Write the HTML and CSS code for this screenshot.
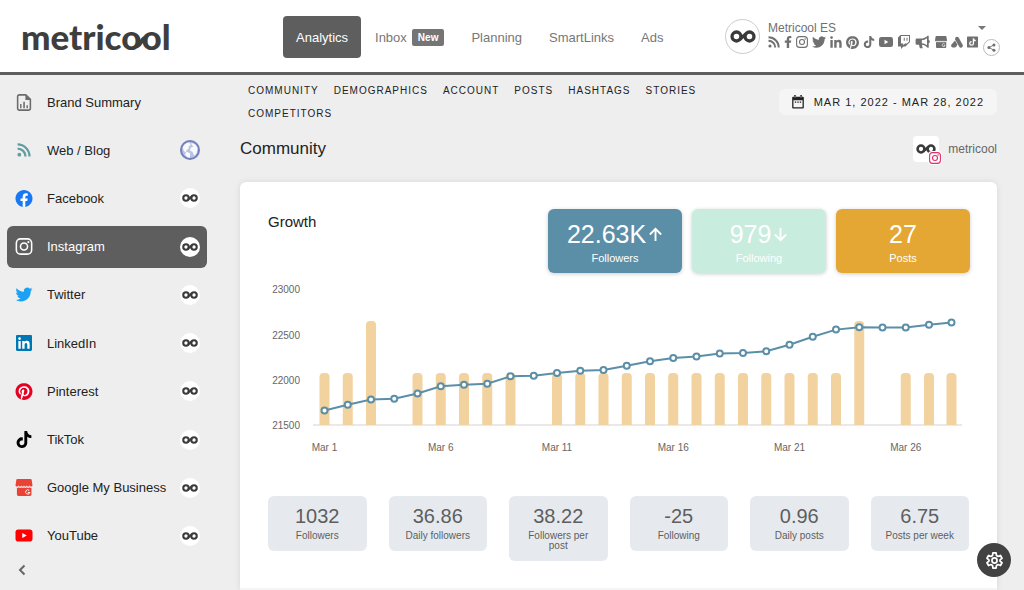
FILE: index.html
```html
<!DOCTYPE html>
<html lang="en">
<head>
<meta charset="utf-8">
<meta name="viewport" content="width=device-width, initial-scale=1">
<title>Metricool – Instagram analytics</title>
<link rel="stylesheet" href="styles.css">
</head>
<body>
<svg class="sprite" aria-hidden="true">
  <symbol id="rss" viewBox="0 0 24 24"><circle cx="4" cy="20" r="3.2"/><path d="M1 9.5A13.5 13.5 0 0 1 14.500 23M1 2.500A20.500 20.500 0 0 1 21.500 23" fill="none" stroke="currentColor" stroke-width="3.800"/></symbol>
  <symbol id="facebook" viewBox="0 0 24 24"><circle cx="12" cy="12" r="11" fill="#fff"/><path d="M24 12.073c0-6.627-5.373-12-12-12s-12 5.373-12 12c0 5.99 4.388 10.954 10.125 11.854v-8.385H7.078v-3.47h3.047V9.43c0-3.007 1.792-4.669 4.533-4.669 1.312 0 2.686.235 2.686.235v2.953H15.83c-1.491 0-1.956.925-1.956 1.874v2.25h3.328l-.532 3.47h-2.796v8.385C19.612 23.027 24 18.062 24 12.073z"/></symbol>
  <symbol id="fb" viewBox="0 0 14 24"><path d="M12.800 13.500l.7-4.400H9.300V6.300c0-1.200.6-2.400 2.500-2.400h1.900V.3S12 0 10.300 0C6.800 0 4.500 2.100 4.500 5.900v3.200H.6v4.400h3.900V24h4.800V13.500z"/></symbol>
  <symbol id="instagram" viewBox="0 0 24 24"><g fill="none" stroke="currentColor" stroke-width="2.200"><rect x="1.200" y="1.200" width="21.600" height="21.600" rx="6"/><circle cx="12" cy="12" r="5"/></g><circle cx="18.200" cy="5.800" r="1.500"/></symbol>
  <symbol id="twitter" viewBox="0 0 24 24"><path d="M23.953 4.570a10 10 0 01-2.825.775 4.958 4.958 0 002.163-2.723c-.951.555-2.005.959-3.127 1.184a4.920 4.920 0 00-8.384 4.482C7.690 8.095 4.067 6.130 1.640 3.162a4.822 4.822 0 00-.666 2.475c0 1.710.870 3.213 2.188 4.096a4.904 4.904 0 01-2.228-.616v.060a4.923 4.923 0 003.946 4.827 4.996 4.996 0 01-2.212.085 4.936 4.936 0 004.604 3.417 9.867 9.867 0 01-6.102 2.105c-.390 0-.779-.023-1.170-.067a13.995 13.995 0 007.557 2.209c9.053 0 13.998-7.496 13.998-13.985 0-.210 0-.420-.015-.630A9.935 9.935 0 0024 4.590z"/></symbol>
  <symbol id="linkedin" viewBox="0 0 24 24"><rect x="1" y="1" width="22" height="22" fill="#fff"/><path d="M20.447 20.452h-3.554v-5.569c0-1.328-.027-3.037-1.852-3.037-1.853 0-2.136 1.445-2.136 2.939v5.667H9.351V9h3.414v1.561h.046c.477-.9 1.637-1.850 3.370-1.850 3.601 0 4.267 2.370 4.267 5.455v6.286zM5.337 7.433c-1.144 0-2.063-.926-2.063-2.065 0-1.138.920-2.063 2.063-2.063 1.140 0 2.064.925 2.064 2.063 0 1.139-.925 2.065-2.064 2.065zm1.782 13.019H3.555V9h3.564v11.452zM22.225 0H1.771C.792 0 0 .774 0 1.729v20.542C0 23.227.792 24 1.771 24h20.451C23.200 24 24 23.227 24 22.271V1.729C24 .774 23.200 0 22.222 0h.003z"/></symbol>
  <symbol id="li" viewBox="3 3 18 18"><path d="M20.447 20.452h-3.554v-5.569c0-1.328-.027-3.037-1.852-3.037-1.853 0-2.136 1.445-2.136 2.939v5.667H9.351V9h3.414v1.561h.046c.477-.9 1.637-1.850 3.370-1.850 3.601 0 4.267 2.370 4.267 5.455v6.286zM5.337 7.433a2.064 2.064 0 1 1 0-4.128 2.064 2.064 0 0 1 0 4.128zm1.782 13.019H3.555V9h3.564z"/></symbol>
  <symbol id="pinterest" viewBox="0 0 24 24"><circle class="pin-back" cx="12" cy="12" r="11"/><path d="M12.017 0C5.396 0 .029 5.367.029 11.987c0 5.079 3.158 9.417 7.618 11.162-.105-.949-.199-2.403.041-3.439.219-.937 1.406-5.957 1.406-5.957s-.359-.720-.359-1.781c0-1.663.967-2.911 2.168-2.911 1.024 0 1.518.769 1.518 1.688 0 1.029-.653 2.567-.992 3.992-.285 1.193.6 2.165 1.775 2.165 2.128 0 3.768-2.245 3.768-5.487 0-2.861-2.063-4.869-5.008-4.869-3.410 0-5.409 2.562-5.409 5.199 0 1.033.394 2.143.889 2.741.099.120.112.225.085.345-.090.375-.293 1.199-.334 1.363-.053.225-.172.271-.401.165-1.495-.690-2.433-2.878-2.433-4.646 0-3.776 2.748-7.252 7.920-7.252 4.158 0 7.392 2.967 7.392 6.923 0 4.135-2.607 7.462-6.233 7.462-1.214 0-2.354-.629-2.758-1.379l-.749 2.848c-.269 1.045-1.004 2.352-1.498 3.146 1.123.345 2.306.535 3.550.535 6.607 0 11.985-5.365 11.985-11.987C23.970 5.390 18.592.026 11.985.026z"/></symbol>
  <symbol id="tiktok" viewBox="0 0 24 24"><path d="M12.525.020c1.310-.020 2.610-.010 3.910-.020.080 1.530.630 3.090 1.750 4.170 1.120 1.110 2.700 1.620 4.240 1.790v4.030c-1.440-.050-2.890-.350-4.200-.970-.570-.260-1.100-.590-1.620-.930-.010 2.920.010 5.840-.020 8.750-.080 1.400-.540 2.790-1.350 3.940-1.310 1.920-3.580 3.170-5.910 3.210-1.430.080-2.860-.310-4.080-1.030-2.020-1.190-3.440-3.370-3.650-5.710-.020-.5-.030-1-.010-1.490.180-1.900 1.120-3.720 2.580-4.960 1.660-1.440 3.980-2.130 6.150-1.720.020 1.480-.040 2.960-.040 4.440-.990-.320-2.150-.230-3.020.370-.630.410-1.110 1.040-1.360 1.750-.210.510-.150 1.070-.140 1.610.240 1.640 1.820 3.020 3.500 2.870 1.120-.010 2.190-.660 2.770-1.610.190-.330.4-.670.410-1.060.1-1.790.060-3.570.070-5.360.010-4.030-.010-8.050.020-12.070z"/></symbol>
  <symbol id="youtube" viewBox="0 0 24 24"><rect y="3.500" width="24" height="17" rx="4"/><path d="M9.500 8.300v7.400l6.500-3.700z" fill="#fff"/></symbol>
  <symbol id="twitch" viewBox="0 0 24 24"><path d="M11.571 4.714h1.715v5.143H11.570zm4.715 0H18v5.143h-1.714zM6 0L1.714 4.286v15.428h5.143V24l4.286-4.286h3.428L22.286 12V0zm14.571 11.143l-3.428 3.428h-3.429l-3 3v-3H6.857V1.714h13.714Z"/></symbol>
  <symbol id="horn" viewBox="0 0 28 24"><path d="M24 1v7.600a3 3 0 0 1 0 5.600V22h-2c-3.200-3-6.500-4.600-10-5l1.500 6h-5L7 17H3.500A2.500 2.500 0 0 1 1 14.500v-6A2.500 2.500 0 0 1 3.500 6H10c5 0 9-2 12-5zm-3 4.500C18 7.700 15 8.800 12 9v5c3 .2 6 1.300 9 3.500z"/></symbol>
  <symbol id="store" viewBox="0 0 24 24"><path d="M3 0h18a2 2 0 0 1 2 2l1 7q-2 3.500-4 0-2 3.500-4 0-2 3.500-4 0-2 3.500-4 0-2 3.500-4 0-2 3.500-4 0L1 2a2 2 0 0 1 2-2z"/><path d="M2 12.500q1.500.5 2.500-.8 2 2 3.600 0 2 2 4 0 2 2 4 0 2 2 3.600 0 1 1.300 2.800.8V22a2 2 0 0 1-2 2H4a2 2 0 0 1-2-2z"/><path d="M19.400 16.200a3 3 0 1 0 .8 2.800h-2.800" fill="none" stroke="#fff" stroke-width="1.300"/></symbol>
  <symbol id="ads" viewBox="0 0 24 24"><path d="M8.800 3.200Q12 0 15.200 3.200L23.500 18q1 3.500-2 5-3.500 1-5-1.500L8.300 7z"/><path d="M8 9l5 8.500L10 22Q6 24 2 22.500-1 20 1 17z"/></symbol>
  <symbol id="tiksquare" viewBox="0 0 24 24"><rect width="24" height="24" rx="1"/><path d="M14 4v11a4 4 0 1 1-4-4M14 4q.5 4.500 5 5" fill="none" stroke="#fff" stroke-width="2.800"/></symbol>
  <symbol id="loop" viewBox="0 0 28 14"><g fill="none" stroke="#3a3a3a" stroke-width="3.600"><circle cx="7" cy="7" r="4.800"/><circle cx="21" cy="7" r="4.800"/><path d="M10.300 10.200L17.700 3.800"/></g></symbol>
  <symbol id="report" viewBox="0 0 24 24"><path d="M14.500 1.200H5.500a2.500 2.500 0 0 0-2.500 2.500v16.600a2.500 2.500 0 0 0 2.500 2.500h13a2.500 2.500 0 0 0 2.500-2.500V7.500z" fill="none" stroke="currentColor" stroke-width="2.200"/><path d="M14 1v7.500h7.500zM6.500 14h2v6h-2zM11 11h2.200v9H11zM15.500 16h2v4h-2z"/></symbol>
  <symbol id="globe" viewBox="0 0 24 24"><circle cx="12" cy="12" r="10.800" fill="#b9c4e2" stroke="#7480bb" stroke-width="2.400"/><path d="M3.500 9Q5 4 11 3l2 3-3 2 1 2-3 2-1 3q-3-1-3.500-6zM13 4q6 0 8 6l-1 6-3 3-2-5-3-1 1-4 3-1zM8 14l4 2v5q-4 0-6-4z" fill="#f8faff"/></symbol>
  <symbol id="share" viewBox="0 0 24 24"><circle cx="5" cy="12" r="4"/><circle cx="18.500" cy="5" r="4"/><circle cx="18.500" cy="19" r="4"/><path d="M18.500 5L5 12l13.500 7" fill="none" stroke="currentColor" stroke-width="2.400"/></symbol>
  <symbol id="calendar" viewBox="0 0 24 24"><path d="M3.500 3h17A1.500 1.500 0 0 1 22 4.500v17a1.500 1.500 0 0 1-1.500 1.500h-17A1.500 1.500 0 0 1 2 21.500v-17A1.500 1.500 0 0 1 3.500 3zM4.200 9v11.800h15.600V9zM5.500 0h2.600v4H5.500zM16 0h2.600v4H16zM6.500 11h2.400v2.400H6.500zM10.800 11h2.400v2.400h-2.400zM15 11h2.400v2.400H15z" fill-rule="evenodd"/></symbol>
  <symbol id="gear" viewBox="0 0 24 24"><g fill="none" stroke="currentColor" stroke-width="2.200" stroke-linejoin="round"><path d="M10 2.500h4l.5 3.200 2 1.200 3-1.200 2 3.500-2.500 2v1.600l2.500 2-2 3.500-3-1.200-2 1.200-.5 3.200h-4l-.5-3.200-2-1.200-3 1.200-2-3.500 2.500-2v-1.600l-2.500-2 2-3.500 3 1.200 2-1.200z"/><circle cx="12" cy="12" r="3.200"/></g></symbol>
</svg>

<header class="topbar">
  <a class="brand" href="#">metrico<span class="brand-link">ol<svg class="brand-bridge" viewBox="0 0 12 12" aria-hidden="true"><path d="M1 10.500Q4 10 6 6T11 1.500"/></svg></span></a>
  <nav class="tabs" aria-label="Main">
    <a class="tab tab-active" href="#">Analytics</a>
    <a class="tab" href="#">Inbox <span class="badge">New</span></a>
    <a class="tab" href="#">Planning</a>
    <a class="tab" href="#">SmartLinks</a>
    <a class="tab" href="#">Ads</a>
  </nav>
  <div class="account">
    <span class="avatar"><svg class="avatar-loop"><use href="#loop"/></svg></span>
    <div class="account-info">
      <button class="account-name" type="button">Metricool ES <span class="caret"></span></button>
      <div class="networks">
        <svg class="net"><use href="#rss"/></svg>
        <svg class="net net-thin"><use href="#fb"/></svg>
        <svg class="net"><use href="#instagram"/></svg>
        <svg class="net net-wide"><use href="#twitter"/></svg>
        <svg class="net"><use href="#li"/></svg>
        <svg class="net net-pin"><use href="#pinterest"/></svg>
        <svg class="net"><use href="#tiktok"/></svg>
        <svg class="net net-wide"><use href="#youtube"/></svg>
        <svg class="net net-wide"><use href="#twitch"/></svg>
        <svg class="net net-horn"><use href="#horn"/></svg>
        <svg class="net"><use href="#store"/></svg>
        <svg class="net"><use href="#ads"/></svg>
        <svg class="net net-square"><use href="#tiksquare"/></svg>
      </div>
      <button class="share" type="button" aria-label="Share"><svg class="share-icon"><use href="#share"/></svg></button>
    </div>
  </div>
</header>

<div class="shell">
  <aside class="sidebar">
    <nav class="side-nav" aria-label="Networks">
      <a class="side-item" href="#"><svg class="side-icon c-gray"><use href="#report"/></svg><span class="side-label">Brand Summary</span></a>
      <a class="side-item" href="#"><svg class="side-icon side-icon-small c-teal"><use href="#rss"/></svg><span class="side-label">Web / Blog</span><svg class="globe"><use href="#globe"/></svg></a>
      <a class="side-item" href="#"><svg class="side-icon c-facebook"><use href="#facebook"/></svg><span class="side-label">Facebook</span><span class="mini"><svg class="mini-loop"><use href="#loop"/></svg></span></a>
      <a class="side-item side-active" href="#" aria-current="page"><svg class="side-icon"><use href="#instagram"/></svg><span class="side-label">Instagram</span><span class="mini"><svg class="mini-loop"><use href="#loop"/></svg></span></a>
      <a class="side-item" href="#"><svg class="side-icon c-twitter"><use href="#twitter"/></svg><span class="side-label">Twitter</span><span class="mini"><svg class="mini-loop"><use href="#loop"/></svg></span></a>
      <a class="side-item" href="#"><svg class="side-icon side-icon-mid c-linkedin"><use href="#linkedin"/></svg><span class="side-label">LinkedIn</span><span class="mini"><svg class="mini-loop"><use href="#loop"/></svg></span></a>
      <a class="side-item" href="#"><svg class="side-icon c-pinterest"><use href="#pinterest"/></svg><span class="side-label">Pinterest</span><span class="mini"><svg class="mini-loop"><use href="#loop"/></svg></span></a>
      <a class="side-item" href="#"><svg class="side-icon c-black"><use href="#tiktok"/></svg><span class="side-label">TikTok</span><span class="mini"><svg class="mini-loop"><use href="#loop"/></svg></span></a>
      <a class="side-item" href="#"><svg class="side-icon c-google"><use href="#store"/></svg><span class="side-label">Google My Business</span><span class="mini"><svg class="mini-loop"><use href="#loop"/></svg></span></a>
      <a class="side-item" href="#"><svg class="side-icon c-youtube"><use href="#youtube"/></svg><span class="side-label">YouTube</span><span class="mini"><svg class="mini-loop"><use href="#loop"/></svg></span></a>
    </nav>
    <button class="collapse" type="button" aria-label="Collapse menu"><svg class="chevron" viewBox="0 0 8 12"><path d="M6.500 1.500L2 6l4.500 4.500"/></svg></button>
  </aside>

  <main class="content">
    <div class="toolbar">
      <nav class="subnav" aria-label="Sections">
        <a class="sub" href="#">COMMUNITY</a>
        <a class="sub" href="#">DEMOGRAPHICS</a>
        <a class="sub" href="#">ACCOUNT</a>
        <a class="sub" href="#">POSTS</a>
        <a class="sub" href="#">HASHTAGS</a>
        <a class="sub" href="#">STORIES</a>
        <a class="sub" href="#">COMPETITORS</a>
      </nav>
      <button class="dates" type="button"><svg class="cal-icon"><use href="#calendar"/></svg>MAR 1, 2022 - MAR 28, 2022</button>
    </div>

    <div class="heading">
      <h1 class="title">Community</h1>
      <div class="profile">
        <span class="profile-pic"><svg class="profile-loop"><use href="#loop"/></svg><span class="profile-badge"><svg class="profile-ig"><use href="#instagram"/></svg></span></span>
        metricool
      </div>
    </div>

    <section class="card">
      <div class="card-head">
        <h2 class="card-title">Growth</h2>
        <div class="kpis">
          <div class="kpi kpi-blue"><span class="kpi-value">22.63K<svg class="arrow" viewBox="0 0 16 16"><path d="M8 15V2M2 8l6-6 6 6"/></svg></span><span class="kpi-label">Followers</span></div>
          <div class="kpi kpi-mint"><span class="kpi-value">979<svg class="arrow" viewBox="0 0 16 16"><path d="M8 1v13M2 8l6 6 6-6"/></svg></span><span class="kpi-label">Following</span></div>
          <div class="kpi kpi-gold"><span class="kpi-value">27</span><span class="kpi-label">Posts</span></div>
        </div>
      </div>
      <svg class="chart" id="chart" viewBox="0 0 702 180" role="img" aria-label="Followers and posts per day"></svg>
      <div class="stats">
        <div class="stat"><span class="stat-value">1032</span><span class="stat-label">Followers</span></div>
        <div class="stat"><span class="stat-value">36.86</span><span class="stat-label">Daily followers</span></div>
        <div class="stat"><span class="stat-value">38.22</span><span class="stat-label">Followers per post</span></div>
        <div class="stat"><span class="stat-value">-25</span><span class="stat-label">Following</span></div>
        <div class="stat"><span class="stat-value">0.96</span><span class="stat-label">Daily posts</span></div>
        <div class="stat"><span class="stat-value">6.75</span><span class="stat-label">Posts per week</span></div>
      </div>
    </section>
  </main>
</div>
<button class="settings" type="button" aria-label="Settings"><svg class="settings-icon"><use href="#gear"/></svg></button>
<script src="chart.js"></script>
</body>
</html>
```

FILE: styles.css
```css
* { box-sizing: border-box; }

body {
  margin: 0;
  min-height: 100vh;
  display: flex;
  flex-direction: column;
  background: #eee;
  color: #222;
  font-family: "Liberation Sans", Arial, sans-serif;
  font-size: 13px;
}

a { color: inherit; text-decoration: none; }
button { border: 0; padding: 0; background: none; color: inherit; font: inherit; cursor: pointer; }
svg { display: block; flex: none; fill: currentColor; }
.sprite { position: absolute; width: 0; height: 0; }

/* Top bar */
.topbar {
  display: flex;
  align-items: center;
  height: 75px;
  padding: 0 24px 0 21px;
  background: #fff;
  border-bottom: 3px solid #5e5e5e;
}
.brand {
  width: 262px;
  color: #3e3e3e;
  font-family: Lato, sans-serif;
  font-size: 35px;
  font-weight: 900;
  line-height: 40px;
}
.brand-link { position: relative; }
.brand-bridge {
  position: absolute;
  left: -6px;
  top: 21px;
  width: 12px;
  height: 12px;
  fill: none;
  stroke: #3e3e3e;
  stroke-width: 4;
}
.tabs { display: flex; align-items: center; gap: 1px; padding-top: 2px; color: #777; }
.tab { display: flex; align-items: center; gap: 5px; height: 42px; padding: 0 13px; }
.tab-active { background: #5e5e5e; color: #fff; border-radius: 4px; }
.badge {
  padding: 0 6px;
  background: #757575;
  color: #fff;
  border-radius: 2px;
  font-size: 10px;
  font-weight: bold;
  line-height: 17px;
}
.account { display: flex; align-items: center; gap: 8px; margin-left: auto; padding-top: 1px; color: #707070; }
.avatar {
  display: grid;
  place-items: center;
  width: 35px;
  height: 35px;
  border: 1px solid #ccc;
  border-radius: 50%;
}
.avatar-loop { width: 26px; height: 13px; }
.account-info { position: relative; width: 232px; padding-bottom: 3px; }
.account-name {
  display: flex;
  align-items: center;
  justify-content: space-between;
  width: 218px;
  height: 14px;
  font-size: 12px;
}
.caret { border: 4px solid transparent; border-top-color: #777; border-bottom: 0; }
.networks { display: flex; align-items: center; gap: 4px; height: 14px; }
.net { width: 12px; height: 12px; }
.net-thin { width: 8px; }
.net-wide { width: 14px; height: 14px; }
.net-pin { width: 13px; height: 13px; }
.net-horn { width: 16px; height: 14px; }
.net-square { width: 11px; }
.pin-back { fill: #fff; }
.share {
  position: absolute;
  right: 0;
  bottom: -4px;
  display: grid;
  place-items: center;
  width: 17px;
  height: 17px;
  background: #fff;
  border: 1px solid #bbb;
  border-radius: 50%;
}
.share-icon { width: 9px; height: 9px; }

/* Sidebar */
.shell { display: flex; flex: 1; }
.sidebar { display: flex; flex-direction: column; flex: none; width: 214px; padding: 6px 7px 7px; }
.side-nav { display: flex; flex: 1; flex-direction: column; justify-content: space-between; }
.side-item {
  display: flex;
  align-items: center;
  gap: 14px;
  height: 42px;
  padding: 0 7px 0 8px;
  border-radius: 6px;
}
.side-active { background: #5e5e5e; color: #fff; }
.side-icon { width: 18px; height: 17px; }
.side-icon-small { height: 14px; }
.side-icon-mid { height: 16px; }
.side-label { flex: 1; white-space: nowrap; }
.globe { width: 20px; height: 20px; }
.mini {
  display: grid;
  place-items: center;
  width: 20px;
  height: 20px;
  background: #fff;
  border-radius: 50%;
}
.side-item .mini, .side-item .globe { margin-left: -14px; }
.mini-loop { width: 16px; height: 8px; }
.c-gray { color: #6b6b6b; }
.c-teal { color: #5f9ea0; }
.c-facebook { color: #1877f2; }
.c-twitter { color: #1da1f2; }
.c-linkedin { color: #0077b5; }
.c-pinterest { color: #e60023; }
.c-black { color: #000; }
.c-google { color: #ea4335; }
.c-youtube { color: #f00; }
.collapse { display: grid; place-items: center; width: 29px; height: 26px; color: #666; }
.chevron { width: 8px; height: 12px; fill: none; stroke: currentColor; stroke-width: 2; }

/* Content */
.content { display: flex; flex: 1; flex-direction: column; min-width: 0; padding: 4px 27px 0 26px; }
.toolbar { display: flex; align-items: flex-start; justify-content: space-between; }
.subnav { display: flex; flex: 1; flex-wrap: wrap; column-gap: 15px; padding-left: 8px; }
.sub { font-size: 10px; line-height: 23px; letter-spacing: 1px; }
.dates {
  display: flex;
  align-items: center;
  gap: 9px;
  height: 26px;
  margin-top: 10px;
  padding: 0 13px 0 12px;
  background: #f5f5f5;
  border-radius: 6px;
  font-size: 11px;
  letter-spacing: 1px;
}
.cal-icon { width: 14px; height: 14px; }
.heading { display: flex; align-items: center; justify-content: space-between; padding: 11px 0 20px; }
.title { margin: 0; font-size: 17px; font-weight: normal; line-height: 26px; }
.profile { display: flex; align-items: center; gap: 9px; color: #666; font-size: 12px; }
.profile-pic {
  position: relative;
  display: grid;
  place-items: center;
  width: 26px;
  height: 26px;
  background: #fff;
  border-radius: 4px;
}
.profile-loop { width: 20px; height: 10px; }
.profile-badge {
  position: absolute;
  right: -3px;
  bottom: -3px;
  display: grid;
  place-items: center;
  width: 14px;
  height: 14px;
  background: #fff;
  border-radius: 4px;
  color: #e1306c;
}
.profile-ig { width: 12px; height: 12px; }

.card {
  flex: 1;
  padding: 27px 27px 0 28px;
  background: #fff;
  border-radius: 6px 6px 0 0;
  box-shadow: 0 0 6px rgba(0, 0, 0, 0.1);
}
.card-head { display: flex; align-items: flex-start; justify-content: space-between; }
.card-title { margin: 0; font-size: 15px; font-weight: normal; line-height: 26px; }
.kpis { display: flex; gap: 10px; }
.kpi {
  display: flex;
  flex-direction: column;
  align-items: center;
  width: 134px;
  height: 64px;
  padding-top: 10px;
  border-radius: 6px;
  box-shadow: 0 1px 4px rgba(0, 0, 0, 0.2);
  color: #fff;
}
.kpi-value { display: flex; align-items: center; gap: 2px; font-size: 25px; line-height: 30px; }
.kpi-label { font-size: 11px; line-height: 18px; }
.kpi-blue { background: #5b8fa8; }
.kpi-mint { background: #c8ecde; }
.kpi-gold { background: #e5a734; }
.arrow { width: 15px; height: 15px; fill: none; stroke: currentColor; stroke-width: 2; }

.chart { width: 100%; height: auto; margin-top: 4px; }
.bar { fill: #f2d29f; }
.axis { stroke: #e9e9e9; stroke-width: 2; }
.line { fill: none; stroke: #5b8fa8; stroke-width: 2; }
.dot { fill: #fff; stroke: #5b8fa8; stroke-width: 2; }
.tick { fill: #666; font-size: 10px; }
.tick-y { text-anchor: end; }
.tick-x { text-anchor: middle; }

.stats {
  display: grid;
  grid-template-columns: repeat(6, 1fr);
  align-items: start;
  gap: 22px;
  margin: 0 -27px 0 -28px;
  padding: 39px 28px 27px;
  border-bottom: 2px solid #f5f5f5;
}
.stat {
  display: flex;
  flex-direction: column;
  align-items: center;
  padding: 8px 12px 10px;
  background: #e6eaee;
  border-radius: 6px;
  color: #5e5e5e;
  text-align: center;
}
.stat-value { font-size: 20px; line-height: 24px; }
.stat-label { padding-top: 3px; font-size: 10px; line-height: 10px; }

.settings {
  position: fixed;
  right: 13px;
  bottom: 13px;
  display: grid;
  place-items: center;
  width: 34px;
  height: 34px;
  background: #424242;
  border-radius: 50%;
  color: #fff;
}
.settings-icon { width: 19px; height: 19px; }
```

FILE: chart.js
```js
const followers = [
  21660, 21724, 21782, 21790, 21848, 21928, 21944, 21957,
  22038, 22045, 22075, 22099, 22108, 22155, 22205, 22240,
  22256, 22290, 22296, 22315, 22386, 22475, 22554, 22580,
  22577, 22577, 22607, 22632
];
const posts = [1, 1, 2, 0, 1, 1, 1, 1, 1, 0, 1, 1, 1, 1, 1, 1, 1, 1, 1, 1, 1, 1, 1, 2, 0, 1, 1, 1];

const base = 148;
const x = i => Math.min(56.5 + i * 23.25, 683.5);
const y = v => base - (v - 21500) * 0.0905;

const parts = [`<line class="axis" x1="45" y1="${base}" x2="694" y2="${base}"/>`];
posts.forEach((n, i) => {
  if (!n) return;
  const h = n * 52;
  parts.push(`<path class="bar" d="M${x(i) - 5} ${base}v${4 - h}q0-4 4-4h2q4 0 4 4V${base}z"/>`);
});
parts.push(`<polyline class="line" points="${followers.map((v, i) => `${x(i)},${y(v)}`).join(' ')}"/>`);
followers.forEach((v, i) => parts.push(`<circle class="dot" cx="${x(i)}" cy="${y(v)}" r="3"/>`));
[21500, 22000, 22500, 23000].forEach(v => {
  parts.push(`<text class="tick tick-y" x="32" y="${y(v) + 4}">${v}</text>`);
});
[1, 6, 11, 16, 21, 26].forEach(d => {
  parts.push(`<text class="tick tick-x" x="${x(d - 1)}" y="174">Mar ${d}</text>`);
});
document.getElementById('chart').innerHTML = parts.join('');
```
